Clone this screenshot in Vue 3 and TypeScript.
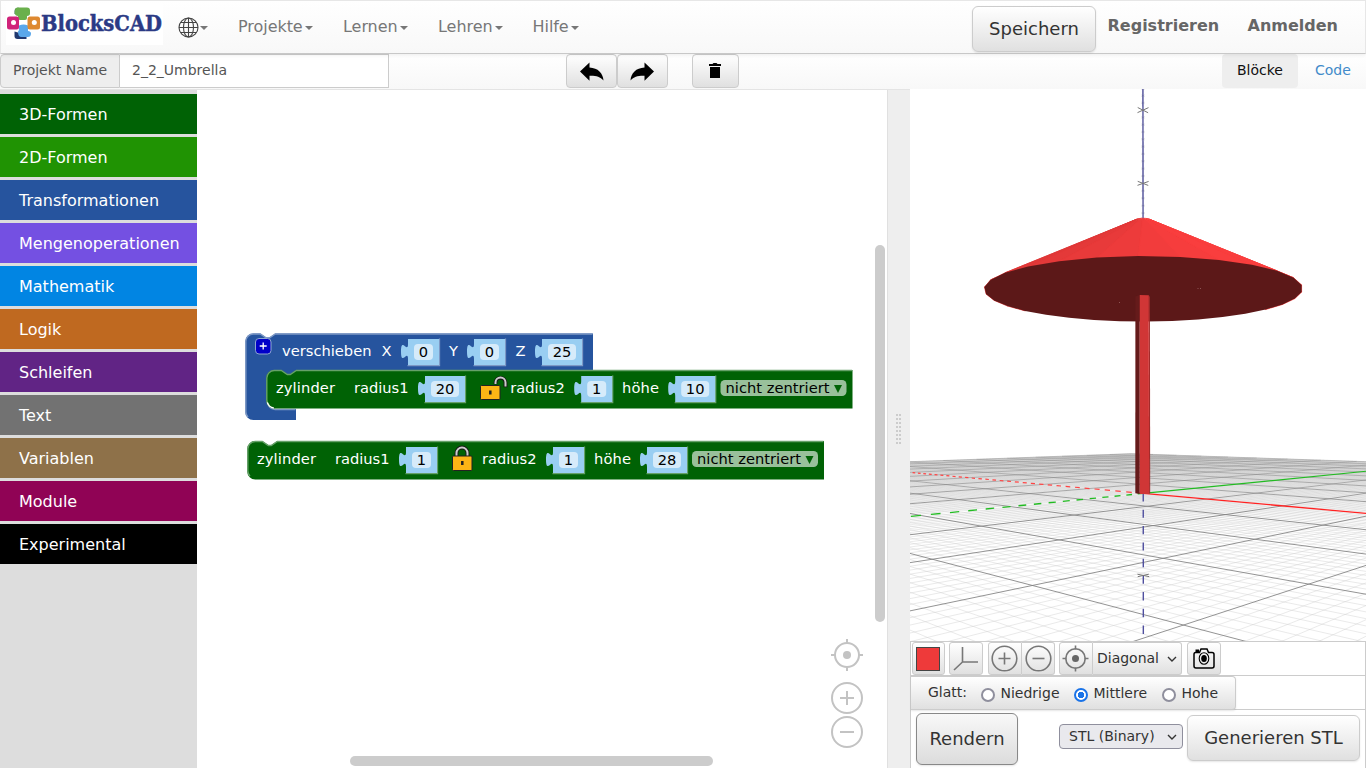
<script setup lang="ts">
interface Category { name: string; color: string }
interface Pt { x: number; y: number }
interface Seg { a: Pt; b: Pt }
interface Facet { points: string; fill: string }

const categories: Category[] = [
  { name: '3D-Formen', color: '#006205' },
  { name: '2D-Formen', color: '#209303' },
  { name: 'Transformationen', color: '#26549e' },
  { name: 'Mengenoperationen', color: '#7450e2' },
  { name: 'Mathematik', color: '#0185e3' },
  { name: 'Logik', color: '#bf6920' },
  { name: 'Schleifen', color: '#612485' },
  { name: 'Text', color: '#727272' },
  { name: 'Variablen', color: '#8e7149' },
  { name: 'Module', color: '#900355' },
  { name: 'Experimental', color: '#000000' },
]
const menus: { label: string; w: number }[] = [
  { label: 'Projekte', w: 105 },
  { label: 'Lernen', w: 95 },
  { label: 'Lehren', w: 94.5 },
  { label: 'Hilfe', w: 80.5 },
]

/* ---- blocks ---- */
const labels = [
  { t: 'verschieben', x: 282, y: 356, w: 89.5 },
  { t: 'X', x: 381.5, y: 356, w: 10 },
  { t: 'Y', x: 449, y: 356, w: 9 },
  { t: 'Z', x: 515.5, y: 356, w: 10 },
  { t: 'zylinder', x: 276, y: 393, w: 59 },
  { t: 'radius1', x: 354, y: 393, w: 54.5 },
  { t: 'radius2', x: 510.3, y: 393, w: 54.5 },
  { t: 'höhe', x: 622, y: 393, w: 37 },
  { t: 'zylinder', x: 257, y: 464, w: 59 },
  { t: 'radius1', x: 335, y: 464, w: 54.5 },
  { t: 'radius2', x: 482, y: 464, w: 54.5 },
  { t: 'höhe', x: 594, y: 464, w: 37 },
]
const numbers = [
  { v: '0', x: 408, y: 339, w: 32 },
  { v: '0', x: 474, y: 339, w: 32 },
  { v: '25', x: 542, y: 339, w: 41 },
  { v: '20', x: 425, y: 376, w: 41 },
  { v: '1', x: 581.2, y: 376, w: 32 },
  { v: '10', x: 675.2, y: 376, w: 41 },
  { v: '1', x: 406, y: 447, w: 32 },
  { v: '1', x: 553, y: 447, w: 32 },
  { v: '28', x: 647, y: 447, w: 41 },
]
const drops = [{ x: 720.5, y: 380 }, { x: 692, y: 451 }]
const cyl = (x: number, y: number, r: number): string =>
  `M${x},${y + 8}a8,8 0 0 1 8,-8h7l6,4 3,0 6,-4H${r}v38.500H${x + 8}a8,8 0 0 1 -8,-8z`
const cylHi = (x: number, y: number, r: number): string =>
  `M${x + 2.7},${y + 35.3}a8,8 0 0 1 -2.2,-5.5V${y + 8}a7.5,7.5 0 0 1 7.5,-7.5h7l6,4 3,0 6,-4H${r - 0.5}`
const cylinders = [{ x: 266.3, y: 370, r: 852.5 }, { x: 247.3, y: 441, r: 824 }]
const numPath = (n: { x: number; y: number; w: number }): string =>
  `M${n.x},${n.y}h${n.w - 1}v26h-${n.w - 1}v-6c0,-10 -7,8 -7,-7.5s7,2.5 7,-7.5z`

/* ---- 3D view: pinhole camera looking slightly upwards ---- */
const F = 666.3, CX = 1138.2, CY = 365.4, D = 83.3, VX = 0.63, VY = -16
const S = 0.0968, C = 0.9953
const TH = (46.22 * Math.PI) / 180
const lat = (x: number, y: number) => x * Math.sin(TH) + y * Math.cos(TH)
const near = (x: number, y: number) => x * Math.cos(TH) - y * Math.sin(TH)
const depth = (x: number, y: number, z: number) => D + z * S - near(x, y) * C
const proj = (x: number, y: number, z: number): Pt => {
  const d = depth(x, y, z)
  return {
    x: CX + (F * (VX + lat(x, y))) / d,
    y: CY - (F * (VY + z * C + near(x, y) * S)) / d,
  }
}
type V3 = [number, number, number]
const seg = (p: V3, q: V3): Seg | null => {
  const dp = depth(...p), dq = depth(...q), n = 8
  if (dp < n && dq < n) return null
  const cut = (a: V3, b: V3, da: number, db: number): V3 => {
    const t = (n - da) / (db - da)
    return [a[0] + (b[0] - a[0]) * t, a[1] + (b[1] - a[1]) * t, a[2] + (b[2] - a[2]) * t]
  }
  const p2 = dp < n ? cut(p, q, dp, dq) : p
  const q2 = dq < n ? cut(q, p, dq, dp) : q
  return { a: proj(...p2), b: proj(...q2) }
}
const minor: Seg[] = [], major: Seg[] = []
for (let i = -100; i <= 100; i++) {
  const list = i % 10 === 0 ? major : minor
  if (i === 0) continue
  for (const s of [seg([i, -100, 0], [i, 100, 0]), seg([-100, i, 0], [100, i, 0])]) if (s) list.push(s)
}
const path = (list: (Seg | null)[]): string =>
  list.filter((s): s is Seg => s !== null)
    .map(s => `M${s.a.x.toFixed(2)},${s.a.y.toFixed(2)}L${s.b.x.toFixed(2)},${s.b.y.toFixed(2)}`).join('')
const dashes = (f: (k: number) => V3, n: number): string => {
  const out: (Seg | null)[] = []
  for (let k = 0; k < n; k += 2) out.push(seg(f(-k), f(-k - 1)))
  return path(out)
}
const redPos = path([seg([0, 0, 0], [100, 0, 0])])
const greenPos = path([seg([0, 0, 0], [0, 100, 0])])
const bluePos = path([seg([0, 0, 34], [0, 0, 60])])
const redNeg = dashes(k => [k, 0, 0], 100)
const greenNeg = dashes(k => [0, k, 0], 76)
const blueNeg = dashes(k => [0, 0, k], 18)
const cross = (z: number, r: number) => [seg([-r, 0, z], [r, 0, z]), seg([0, -r, z], [0, r, z])]
const bigTicks = path([40, 50, -10].flatMap(z => cross(z, 1)))
const smallTicks = path(Array.from({ length: 20 }, (_, k) => 36 + k).filter(z => z % 10 !== 0).flatMap(z => cross(z, 0.35)))

const fmt = (p: Pt): string => `${p.x.toFixed(2)},${p.y.toFixed(2)}`
const ring = (r: number, z: number, n: number): Pt[] =>
  Array.from({ length: n }, (_, k) => {
    const a = (k * 2 * Math.PI) / n
    return proj(r * Math.cos(a), r * Math.sin(a), z)
  })
const N = 30
const base = ring(19.92, 25, N), top = ring(1, 35, N)
const cone: Facet[] = []
for (let k = 0; k < N; k++) {
  const j = (k + 1) % N, a = ((k + 0.5) * 2 * Math.PI) / N
  if (near(Math.cos(a), Math.sin(a)) < -0.45) continue
  const s = Math.min(1, Math.max(0, (lat(Math.cos(a), Math.sin(a)) + 0.95) / 1.35))
  cone.push({
    points: [base[k], base[j], top[j], top[k]].map(fmt).join(' '),
    fill: `rgb(${Math.round(218 + 31 * s)},${Math.round(54 + 8 * s)},${Math.round(55 + 7 * s)})`,
  })
}
const coneBack = [...base, ...top].sort((p, q) => p.x - q.x)
const apexY = Math.min(...top.map(p => p.y))
const coneFill = [
  coneBack[5], coneBack[coneBack.length - 6],
  { x: proj(0, 0, 35).x + 6, y: apexY + 2 }, { x: proj(0, 0, 35).x - 6, y: apexY + 2 },
].map(fmt).join(' ')
const disc = base.map(fmt).join(' ')
const pb = ring(1, 0, 5), pt = ring(1, 25, 5)
const side = (i: number, j: number): string => [pb[i], pb[j], pt[j], pt[i]].map(fmt).join(' ')
const pole: Facet[] = [
  { points: side(3, 4), fill: '#651b1b' },
  { points: side(0, 1), fill: '#a32b2b' },
  { points: side(4, 0), fill: '#d03636' },
]
</script>

<template>
  <div class="app">
    <header class="nav">
      <svg class="logo" width="157" height="42" viewBox="6 3 157 42">
        <rect x="6" y="3" width="157" height="42" fill="#fff" />
        <path d="M14.500 14v-3q0-2.500 2-3l2-.500v7z" fill="#2b6a3e" />
        <path d="M18 7.500h9q3 0 3 3v3q0 2-3 2.500v2q0 2-2 2h-5q-2 0-2-2v-2q-3-.500-3-2.500v-3q0-3 3-3z" fill="#6ab04c" />
        <path d="M14.500 31.500v4.500q0 3 3 3h9v-4z" fill="#20386f" />
        <path d="M19 25.500q4.500-2 9 0v5.500q3 .500 3 2.500 0 3.500-3.500 3.500h-6q-3.500 0-3.500-5.500 1-1 1-2z" fill="#5aa7ea" />
        <rect x="7" y="16.500" width="12" height="13" rx="2.500" fill="#d0237a" />
        <circle cx="13.500" cy="22.500" r="2.500" fill="#fff" />
        <rect x="27.500" y="16.500" width="12.500" height="13" rx="2.500" fill="#de8930" />
        <circle cx="34.300" cy="22.500" r="2.500" fill="#fff" />
        <text class="brand" x="41" y="31.300" textLength="121" lengthAdjust="spacingAndGlyphs">BlocksCAD</text>
      </svg>
      <div class="lang">
        <svg width="21" height="21" viewBox="0 0 21 21" fill="none" stroke="#444" stroke-width="1.100">
          <circle cx="10.500" cy="10.500" r="9.500" /><ellipse cx="10.500" cy="10.500" rx="5" ry="9.500" />
          <path d="M10.500 1v19M1 10.500h19M2.500 5.500h16M2.500 15.500h16" />
        </svg><i class="caret" />
      </div>
      <div v-for="m in menus" :key="m.label" class="menu" :style="{ width: m.w + 'px' }">{{ m.label }}<i class="caret" /></div>
      <button class="save">Speichern</button>
      <a class="auth">Registrieren</a>
      <a class="auth last">Anmelden</a>
    </header>

    <div class="bar">
      <span class="plabel">Projekt Name</span>
      <span class="pname">2_2_Umbrella</span>
      <button class="tool first"><svg width="26" height="22" viewBox="0 0 26 22"><path d="M1 10.500 10.500 1.500v5C19 7 24 12 24.500 19.500 21 15.500 17 14.500 10.500 14.700v5z" /></svg></button>
      <button class="tool"><svg width="26" height="22" viewBox="0 0 26 22"><path d="M25 10.500 15.500 1.500v5C7 7 2 12 1.500 19.500 5 15.500 9 14.500 15.500 14.700v5z" /></svg></button>
      <button class="tool trash"><svg width="14" height="17" viewBox="0 0 14 17"><path d="M1 2h3.500l1-1h3l1 1H13v2H1zM2 5h10v11H2z" /></svg></button>
      <span class="tab active">Blöcke</span>
      <span class="tab">Code</span>
    </div>

    <main class="main">
      <nav class="side">
        <div v-for="c in categories" :key="c.name" class="cat" :style="{ background: c.color }">{{ c.name }}</div>
      </nav>

      <svg class="work" width="690" height="678" viewBox="197 90 690 678">
        <path d="M245.300,341.500a8,8 0 0 1 8,-8h7l6,4 3,0 6,-4H593V371H300V380H266.500V401a8,8 0 0 0 8,8H296V420H253.300a8,8 0 0 1 -8,-8z" fill="#26549e" />
        <path d="M248,417.300a8,8 0 0 1 -2.200,-5.500V341.500a7.500,7.500 0 0 1 7.500,-7.500h7l6,4 3,0 6,-4H592.500M269.300,406.700a8,8 0 0 0 5.700,2.800H295.500" fill="none" stroke="#7d98c5" stroke-width="1.500" />
        <rect x="255.500" y="338.500" width="15.500" height="15.500" rx="3.500" fill="#0000c8" stroke="#8ea5d2" stroke-width="1" />
        <path d="M263.200 342.500v7M259.700 346h7" stroke="#fff" stroke-width="1.300" />
        <g v-for="c in cylinders" :key="c.y">
          <path :d="cyl(c.x, c.y, c.r)" fill="#006205" />
          <path :d="cylHi(c.x, c.y, c.r)" fill="none" stroke="#66a169" stroke-width="1.400" />
        </g>
        <path d="M267.300,402.500a8,8 0 0 0 6.500,5.500" fill="none" stroke="#fff" stroke-width="1.300" />
        <text v-for="(l, i) in labels" :key="i" :x="l.x" :y="l.y" :textLength="l.w" class="bl">{{ l.t }}</text>
        <g v-for="(n, i) in numbers" :key="'n' + i">
          <path :d="`M${n.x - 0.5},${n.y + 26.600}h${n.w}v-27`" fill="none" :stroke="n.y < 350 ? '#7d98c5' : '#66a169'" stroke-width="1.300" />
          <path :d="numPath(n)" fill="#99cef2" />
          <rect :x="n.x + 6" :y="n.y + 5" :width="n.w - 13" height="16" rx="4" fill="#d6ebfa" />
          <text :x="n.x + n.w / 2 - 0.5" :y="n.y + 18" text-anchor="middle" class="num">{{ n.v }}</text>
        </g>
        <g v-for="d in drops" :key="d.x">
          <rect :x="d.x" :y="d.y" width="126" height="16" rx="4.500" fill="#99c09b" />
          <text :x="d.x + 5" :y="d.y + 13" class="num" textLength="104">nicht zentriert</text>
          <path :d="`M${d.x + 113.500},${d.y + 5}h8l-4,8z`" fill="#006205" />
        </g>
        <g stroke="#222" stroke-width="1">
          <path d="M495.500 384v-1.500a5 5 0 0 1 10 0v4.500" fill="none" stroke="#181818" stroke-width="3.800" transform="translate(0 .3)" />
          <path d="M495.500 384v-1.500a5 5 0 0 1 10 0v4" fill="none" stroke="#ccc" stroke-width="2" />
          <rect x="480.500" y="385.500" width="19.500" height="14" rx="1" fill="#fdb515" />
          <path d="M490.300 390.500v4" stroke-width="2.500" />
          <path d="M456.500 456v-3a5.500 5.500 0 0 1 11 0v3" fill="none" stroke="#181818" stroke-width="3.800" />
          <path d="M456.500 456v-3a5.500 5.500 0 0 1 11 0v3" fill="none" stroke="#ccc" stroke-width="2" />
          <rect x="452.500" y="456" width="19.500" height="14.500" rx="1" fill="#fdb515" />
          <path d="M462.300 461v4" stroke-width="2.500" />
        </g>
        <rect x="875" y="245" width="10" height="377" rx="5" fill="#ccc" />
        <rect x="350" y="756" width="363" height="10" rx="5" fill="#ccc" />
        <g fill="none" stroke="#c3c3c3" stroke-width="2">
          <circle cx="847" cy="655" r="12" /><path d="M847 639v5M847 666v5M831 655h5M858 655h5" />
          <circle cx="847" cy="655" r="4" fill="#c3c3c3" stroke="none" />
          <circle cx="847" cy="698" r="15" /><path d="M840 698h14M847 691v14" />
          <circle cx="847" cy="732" r="15" /><path d="M840 732h14" />
        </g>
      </svg>

      <div class="split"><i v-for="k in 16" :key="k" /></div>

      <section class="view">
        <svg class="scene" width="456" height="552" viewBox="910 89 456 552" fill="none">
          <defs>
            <linearGradient id="gMinor" gradientUnits="userSpaceOnUse" x1="0" y1="453" x2="0" y2="560">
              <stop offset="0" stop-color="#ccc" stop-opacity=".35" /><stop offset="1" stop-color="#ccc" stop-opacity=".42" />
            </linearGradient>
            <linearGradient id="gMajor" gradientUnits="userSpaceOnUse" x1="0" y1="453" x2="0" y2="510">
              <stop offset="0" stop-color="#808080" stop-opacity=".28" /><stop offset="1" stop-color="#808080" stop-opacity=".85" />
            </linearGradient>
          </defs>
          <path v-for="(s, i) in minor" :key="i" :d="path([s])" stroke="url(#gMinor)" />
          <path v-for="(s, i) in major" :key="'m' + i" :d="path([s])" stroke="url(#gMajor)" />
          <path :d="redPos" stroke="#f22" stroke-width="1.300" /><path :d="redNeg" stroke="#f44" stroke-width="1.200" />
          <path :d="greenPos" stroke="#2b2" stroke-width="1.200" /><path :d="greenNeg" stroke="#2b2" stroke-width="1.300" />
          <path :d="smallTicks" stroke="#ddd" stroke-width="0.700" />
          <path :d="bluePos" stroke="#22227f" stroke-width="1.100" /><path :d="blueNeg" stroke="#4f4f9f" stroke-width="1.400" />
          <path :d="bigTicks" stroke="#777" />
          <polygon :points="coneFill" fill="#ee3c3c" />
          <polygon v-for="(f, i) in cone" :key="'c' + i" :points="f.points" :fill="f.fill" :stroke="f.fill" stroke-width="0.700" stroke-linejoin="round" />
          <polygon :points="disc" fill="#5c1818" />
          <polygon v-for="(f, i) in pole" :key="'p' + i" :points="f.points" :fill="f.fill" />
          <path d="M1197.500 288.500h1M1200 288.500h1M1119 302.500h1" stroke="#8d5555" />
        </svg>
        <div class="panel">
          <div class="prow icons">
            <span class="ib c1"><i class="swatch" /></span>
            <span class="ib c2"><svg width="26" height="26" viewBox="0 0 26 26"><path d="M9.500 1v15H25M9.500 16 1 24" /></svg></span>
            <span class="ib c3"><svg width="27" height="27" viewBox="0 0 27 27"><circle cx="13.500" cy="13.500" r="12.300" /><path d="M13.500 7.500v12M7.500 13.500h12" /></svg></span>
            <span class="ib c4"><svg width="27" height="27" viewBox="0 0 27 27"><circle cx="13.500" cy="13.500" r="12.300" /><path d="M7.500 13.500h12" /></svg></span>
            <span class="ib c5"><svg width="27" height="27" viewBox="0 0 27 27"><circle cx="13.500" cy="13.500" r="9.700" /><path d="M13.500.5v4M13.500 22.500v4M.5 13.500h4M22.500 13.500h4" /><circle cx="13.500" cy="13.500" r="3.500" fill="#666" stroke="none" /></svg></span>
            <span class="ib c6">Diagonal<svg width="10" height="7" viewBox="0 0 10 7" class="chev"><path d="M1 1l4 4 4-4" /></svg></span>
            <span class="ib c7"><svg width="22" height="22" viewBox="0 0 22 22" class="cam"><path d="M2.500 5.500h4L8 2h6l1.500 3.500H19q2 0 2 2V19q0 2-2 2H3q-2 0-2-2V7.500q0-2 1.500-2z" /><path d="M2.500 2.500h3.500v2.500h-3.500z" fill="#000" stroke="none" /><ellipse cx="11" cy="11.500" rx="4.800" ry="5.700" stroke-width="1.100" /><ellipse cx="11" cy="11.500" rx="2.800" ry="3.500" fill="#000" stroke="none" /></svg></span>
          </div>
          <div class="prow">
            <div class="smooth">
              <span class="gl">Glatt:</span>
              <i class="radio" /><span class="rl r1">Niedrige</span>
              <i class="radio on" /><span class="rl r2">Mittlere</span>
              <i class="radio" /><span class="rl">Hohe</span>
            </div>
          </div>
          <div class="actions">
            <button class="big render">Rendern</button>
            <span class="select">STL (Binary)<svg width="10" height="7" viewBox="0 0 10 7" class="chev"><path d="M1 1l4 4 4-4" /></svg></span>
            <button class="big gen">Generieren STL</button>
          </div>
        </div>
      </section>
    </main>
  </div>
</template>

<style>
html, body { margin: 0; overflow: hidden; }
</style>

<style scoped>
.app { width: 1366px; height: 768px; display: flex; flex-direction: column; overflow: hidden; background: #fff; font-family: "DejaVu Sans", sans-serif; font-size: 14px; color: #333; }
.app * { box-sizing: border-box; }
button { font-family: inherit; padding: 0; margin: 0; }
.nav { height: 54px; flex: none; display: flex; align-items: flex-start; background: linear-gradient(#fff, #f8f8f8); border: 1px solid #e7e7e7; border-bottom-color: #c8c8c8; box-shadow: 0 1px 4px rgba(0,0,0,.08); position: relative; font-size: 16px; color: #777; padding-left: 5px; }
.logo { margin-top: 2px; flex: none; overflow: visible; }
.brand { font: bold 22.5px "DejaVu Serif", serif; fill: #2b3a85; stroke: #2b3a85; stroke-width: .5px; }
.lang { width: 75px; margin-top: 16px; padding-left: 15px; display: flex; align-items: center; }
.caret { display: inline-block; border: 4px solid transparent; border-top-color: #777; border-bottom: 0; vertical-align: middle; margin-left: 2px; flex: none; }
.lang .caret { margin-left: 1px; }
.menu { height: 50px; line-height: 51px; white-space: nowrap; flex: none; letter-spacing: -.05px; }
.save { margin-left: 359px; width: 124px; height: 46px; margin-top: 5px; border: 1px solid #ccc; border-radius: 6px; background: linear-gradient(#fff, #e0e0e0); font-size: 18px; color: #333; box-shadow: 0 1px 2px rgba(0,0,0,.1); flex: none; padding-bottom: 2px; }
.auth { font-weight: bold; font-size: 16px; line-height: 49px; width: 140px; margin-left: 11.500px; color: #666; flex: none; }
.auth.last { margin-left: 0; width: 100px; }
.bar { height: 36px; flex: none; display: flex; align-items: flex-start; background: linear-gradient(#fff, #f8f8f8); border-bottom: 1px solid #e4e4e4; color: #555; }
.plabel { width: 120px; height: 34px; line-height: 31px; border: 1px solid #ccc; border-radius: 4px 0 0 4px; background: #eee; padding-left: 12px; flex: none; }
.pname { width: 269px; height: 34px; line-height: 31px; border: 1px solid #ccc; border-left: 0; background: #fff; padding-left: 12px; flex: none; }
.tool { width: 51px; height: 34px; border: 1px solid #ccc; border-radius: 4px; background: linear-gradient(#fff, #e0e0e0); display: flex; align-items: center; justify-content: center; flex: none; }
.tool svg { margin: 2px 1px 0 0; }
.tool.first { margin-left: 177px; }
.tool.first svg { margin-right: 0; }
.tool.trash { width: 47px; margin-left: 24px; }
.tool.trash svg { margin: -2px 1px 0 0; }
.tab { line-height: 33px; height: 34px; color: #428bca; padding: 0 15px; border-radius: 4px; }
.tab.active { margin-left: 483px; width: 76px; margin-right: 2px; background: #eee; color: #111; }
.main { flex: 1; display: flex; min-height: 0; }
.side { width: 197px; height: 678px; background: #ddd; padding-top: 4px; flex: none; }
.cat { height: 40px; margin-bottom: 3px; padding-left: 19px; line-height: 42px; font-size: 16px; color: #fff; }
.work { display: block; flex: none; background: #fff; }
.bl { font-size: 14.670px; fill: #fff; }
.num { font-size: 14.670px; fill: #000; }
.split { width: 23px; flex: none; background: #eee; border-left: 1px solid #e0e0e0; display: grid; grid-template-columns: repeat(2, 2px); grid-auto-rows: 2px; gap: 2px 1px; align-content: center; justify-content: center; padding-right: 1px; }
.split i { background: #ccc; }
.view { width: 456px; margin-top: -1px; flex: none; display: flex; flex-direction: column; background: #fff; }
.scene { display: block; flex: none; }
.panel { height: 127px; border: 1px solid #ccc; border-bottom: 0; flex: none; }
.prow { height: 34px; border-bottom: 1px solid #ccc; display: flex; }
.icons { padding-left: 1px; }
.ib { height: 33px; border: 1px solid #ccc; border-radius: 3px; background: linear-gradient(#fff, #e0e0e0); display: flex; align-items: center; justify-content: center; flex: none; }
.ib svg { fill: none; stroke: #777; stroke-width: 1.6; }
.c1 { width: 33px; padding-right: 2px; } .swatch { width: 24px; height: 24px; background: #ee3a3a; border: 1px solid #444; }
.c2 { width: 34px; margin-left: 4px; padding-right: 1px; } .c3 { width: 34px; margin-left: 5px; border-radius: 3px 0 0 3px; padding-right: 1px; }
.c4 { width: 33px; border-left: 0; border-radius: 0 3px 3px 0; } .c5 { width: 34px; margin-left: 4px; border-radius: 3px 0 0 3px; padding-right: 1px; }
.c6 { width: 89px; border-left: 0; border-radius: 0 3px 3px 0; gap: 8px; padding-bottom: 1px; } .c7 { width: 34px; margin-left: 5px; padding-right: 1px; }
.ib .cam { stroke: #000; stroke-width: 1.5; margin-top: -1px; }
.ib .chev, .chev { fill: none; stroke: #333; stroke-width: 1.4; margin-top: 2px; }
.smooth { width: 325px; height: 34px; border: 1px solid #ccc; border-left: 0; border-radius: 0 4px 4px 0; background: linear-gradient(#fff, #e0e0e0); display: flex; align-items: flex-start; box-shadow: 0 1px 2px rgba(0,0,0,.1); }
.gl { margin-left: 17px; width: 53px; line-height: 30px; }
.radio { width: 14px; height: 14px; border: 2px solid #8f8f9d; border-radius: 50%; background: #fff; margin-top: 11px; flex: none; }
.radio.on { border-color: #1a73e8; background: radial-gradient(circle, #1a73e8 3px, #fff 3.500px); }
.rl { line-height: 32px; margin-left: 5.500px; } .r1 { width: 73.500px; } .r2 { width: 68.500px; }
.actions { display: flex; align-items: flex-start; }
.big { border: 1px solid #ccc; border-radius: 6px; background: linear-gradient(#fff, #e0e0e0); font-size: 18px; color: #333; flex: none; box-shadow: 0 1px 2px rgba(0,0,0,.1); padding-bottom: 2px; }
.render { width: 102px; height: 52px; margin: 3px 0 0 5px; border-color: #888; background: linear-gradient(#f8f8f8, #dcdcdc); }
.select { width: 124px; height: 25px; margin: 14px 0 0 41px; border: 1px solid #8f8f9d; border-radius: 4px; background: #e9e9ed; line-height: 23px; display: flex; align-items: center; padding-left: 9px; gap: 12px; white-space: nowrap; flex: none; }
.gen { width: 173px; height: 46px; margin: 5px 0 0 4px; }
</style>
